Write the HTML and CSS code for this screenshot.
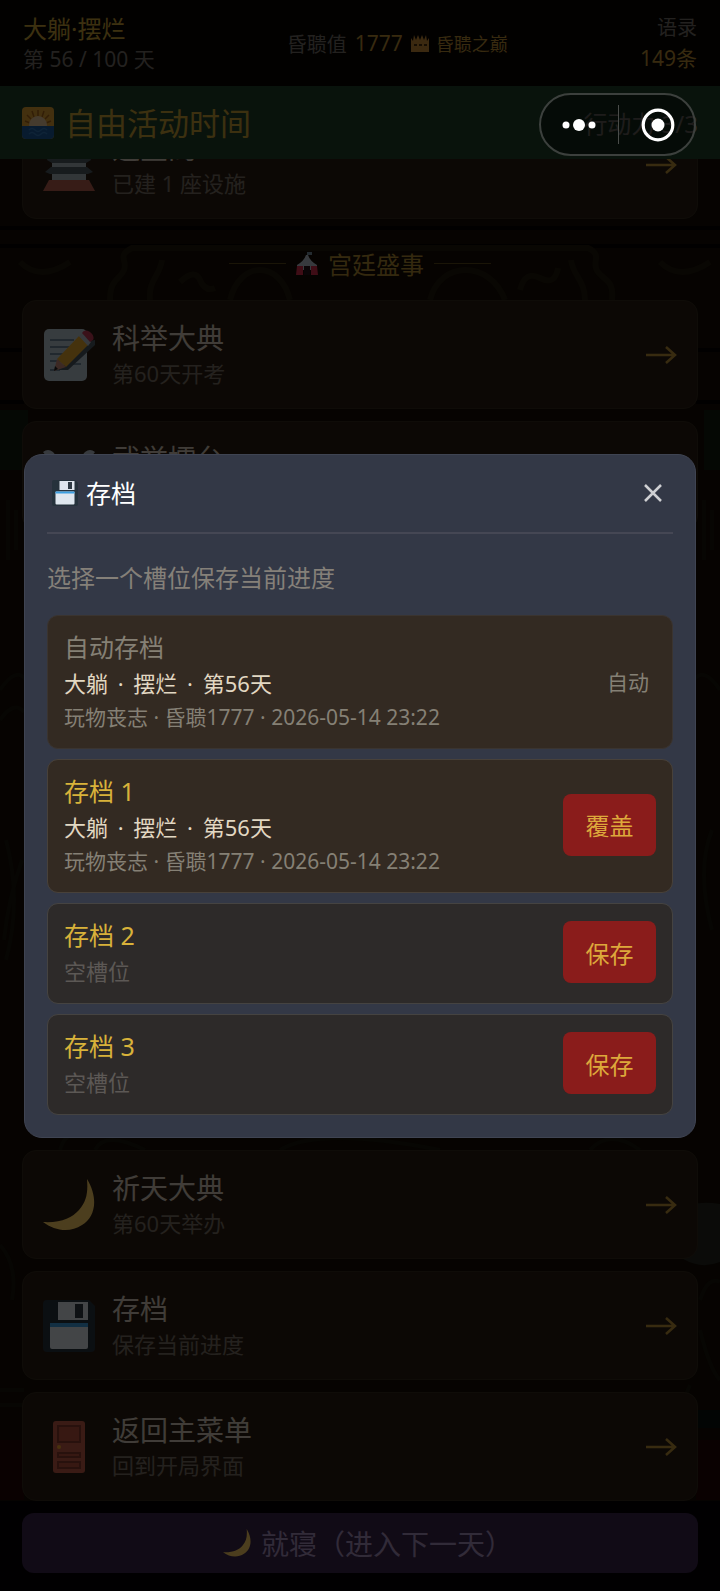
FILE: index.html
```html
<!DOCTYPE html>
<html lang="zh-CN">
<head>
<meta charset="utf-8">
<meta name="viewport" content="width=device-width, initial-scale=1">
<title>存档</title>
<link rel="stylesheet" href="styles.css">
</head>
<body>
<svg class="defs" aria-hidden="true">
  <symbol id="floppy" viewBox="0 0 52 52">
    <path d="M4 0h42l6 6v42a4 4 0 0 1-4 4H4a4 4 0 0 1-4-4V4a4 4 0 0 1 4-4z" fill="#26323c"/>
    <path d="M15 2h30v18H15z" fill="#dfe6ee"/>
    <path d="M32 4h8v14h-8z" fill="#2f3a44"/>
    <path d="M7 25a2 2 0 0 1 2-2h34a2 2 0 0 1 2 2v22a2 2 0 0 1-2 2H9a2 2 0 0 1-2-2z" fill="#dfe6ee"/>
    <path d="M7 23h38v4H7z" fill="#3c9fe0"/>
  </symbol>
  <symbol id="moon" viewBox="0 0 52 52">
    <path d="M44 0c12 20 8 38-5 46C27 54 12 52 0 43c18 1 29-4 36-12 8-9 9-18 8-31z" fill="#ffd065"/>
  </symbol>
  <symbol id="arrow" viewBox="0 0 32 18">
    <path d="M1 9h28M21 1l9 8-9 8" fill="none" stroke="currentColor" stroke-width="2.5"/>
  </symbol>
</svg>

<div class="game">
  <svg class="scenery" viewBox="0 0 720 1591" preserveAspectRatio="xMidYMid slice" aria-hidden="true">
    <g fill="none" stroke="#20180b" stroke-width="6">
      <path d="M0 246h720M0 228h720M0 350h24M0 402h24M696 350h24M696 402h24" stroke="#050301" stroke-width="4"/>
      <path d="M110 300c0-22 10-20 14-30s-8-14 8-22h456c16 8 2 14 10 24s16 8 14 28"/>
      <path d="M180 282q15-14 20-2t15 8M230 300c10-40 50-40 60 0M430 300c10-40 60-40 75 0M520 290q5-20 20-12t18-10M150 300c-2-20 10-24 12-40M585 300c0-20-12-24-14-40M20 262q20 20 50 0M660 262q20 20 50 0"/>
      <path d="M8 500v60M16 510v40M704 500v60M712 510v40M0 690q16-24 26-10M0 720q14-20 24-8M720 690q-16-24-26-10M6 840q16 60 0 120M22 860q-14 40-18 80M712 830q-16 40 0 100" stroke="#19150b" stroke-width="4"/>
      <path d="M60 1150q5-18 20-16M95 1150q10-20 50 0M280 1150q40-24 160 0M590 1150q20-22 50 0M0 1245q18 20 12 55M0 1390h24M0 1405h24M700 1300q8-24 20-18M700 1330q10 40 20 50M690 1385l-10 24" stroke="#19150b" stroke-width="4"/>
    </g>
    <path d="M0 410h28v60H0zM704 410h16v60h-16z" fill="#121c0e"/>
    <path d="M662 1240q10-44 58-36v58q-30 12-58-22z" fill="#25261f"/>
    <path d="M0 1440h24v60H0zM696 1440h24v60h-24z" fill="#220404"/>
    <path d="M696 1410h24v18h-24z" fill="#07120e"/>
  </svg>

  <header class="status">
    <div class="who"><strong>大躺·摆烂</strong><span>第 56 / 100 天</span></div>
    <div class="rank">
      <span>昏聩值</span><b>1777</b>
      <em><svg width="18" height="18" viewBox="0 0 18 18" aria-hidden="true"><path d="M0 4l2 3 1-6 2 5 2-5 2 5 2-5 2 5 2-5 1 6 2-3v14H0z" fill="#c68a38"/><path d="M3 10h3v2H3zm5 0h3v2H8zm5 0h3v2h-3z" fill="#4a3010"/></svg>昏聩之巅</em>
    </div>
    <div class="quotes"><span>语录</span><b>149条</b></div>
  </header>

  <div class="phase">
    <h1><svg width="32" height="32" viewBox="0 0 32 32" aria-hidden="true"><rect width="32" height="32" rx="4" fill="#e0a233"/><g stroke="#a8641a" stroke-width="1.5"><path d="M16 3v6M10 4l2 6M22 4l-2 6M5 8l4 4M27 8l-4 4M3 14l5 2M29 14l-5 2"/></g><circle cx="16" cy="18" r="9" fill="#e8c59a"/><path d="M0 19h32v9a4 4 0 0 1-4 4H4a4 4 0 0 1-4-4z" fill="#1d5c9e"/><path d="M7 23q3-3 6 0t6 0 6 0M7 27q3-3 6 0t6 0 6 0" fill="none" stroke="#3277b8" stroke-width="1.5"/></svg>自由活动时间</h1>
    <span>行动力 3/3</span>
  </div>

  <main class="feed">
    <section class="group">
      <a class="card card-first" href="#build">
        <svg class="icon" viewBox="0 0 52 52" aria-hidden="true"><path d="M9 8h34v33H9z" fill="#a9b5bd"/><path d="M8 10h36l4 11-5 3H9l-5-3zM8 28h36l6 5-5 2H7l-5-2z" fill="#4d5a63"/><path d="M6 41h40l6 11H0z" fill="#b8604e"/></svg>
        <span class="label"><b>造星阁</b><small>已建 1 座设施</small></span>
        <svg class="go" aria-hidden="true"><use href="#arrow"/></svg>
      </a>
      <h2><svg width="22" height="24" viewBox="0 0 22 24" aria-hidden="true"><path d="M11 0h5v3h-5z" fill="#7890a0"/><path d="M10 3h2q2 6 9 10v5H1v-5q7-4 9-10z" fill="#b9c4cf"/><path d="M1 14h6v9H0zm14 0h6l1 9h-7z" fill="#d42c4a"/><path d="M8 14h6v9H8z" fill="#241318"/></svg>宫廷盛事</h2>
      <a class="card" href="#exam">
        <svg class="icon" viewBox="0 0 52 52" aria-hidden="true"><rect x="1" width="43" height="52" rx="5" fill="#b9c8d2"/><path d="M7 11h24M7 18h22M7 25h18M7 32h12M24 35h14M7 41h10" stroke="#71889a" stroke-width="2"/><path d="M15 41l32-29 5-1v5L25 41z" fill="#4a5862"/><path d="M14 30L36 7l9 9-22 22z" fill="#e6a92c"/><path d="M14 30l9 8-12 4z" fill="#c98b7a"/><path d="M12 37l3 3-4 2z" fill="#222"/><path d="M36 7l4-3 8 9-3 4z" fill="#b7bfc8"/><path d="M39 4c4-7 14 2 11 7l-3 2z" fill="#c13a55"/></svg>
        <span class="label"><b>科举大典</b><small>第60天开考</small></span>
        <svg class="go" aria-hidden="true"><use href="#arrow"/></svg>
      </a>
      <a class="card" href="#arena">
        <svg class="icon" viewBox="0 0 52 52" aria-hidden="true"><path d="M0 2q5-4 10 0l30 36-6 6zM52 2q-5-4-10 0L12 38l6 6z" fill="#b9c4cf"/></svg>
        <span class="label"><b>武举擂台</b><small>第60天开擂</small></span>
        <svg class="go" aria-hidden="true"><use href="#arrow"/></svg>
      </a>
    </section>
    <section class="group">
      <a class="card" href="#pray">
        <svg class="icon" aria-hidden="true"><use href="#moon"/></svg>
        <span class="label"><b>祈天大典</b><small>第60天举办</small></span>
        <svg class="go" aria-hidden="true"><use href="#arrow"/></svg>
      </a>
      <a class="card" href="#save">
        <svg class="icon" aria-hidden="true"><use href="#floppy"/></svg>
        <span class="label"><b>存档</b><small>保存当前进度</small></span>
        <svg class="go" aria-hidden="true"><use href="#arrow"/></svg>
      </a>
      <a class="card" href="#menu">
        <svg class="icon" viewBox="0 0 52 52" aria-hidden="true"><rect x="10" width="32" height="52" rx="3" fill="#c45c48"/><path d="M15 5h22v16H15zM15 32h22v4H15zM15 41h22v6H15z" fill="#b8523f" stroke="#863a2c" stroke-width="2"/><circle cx="16" cy="26" r="2" fill="#f0a82c"/></svg>
        <span class="label"><b>返回主菜单</b><small>回到开局界面</small></span>
        <svg class="go" aria-hidden="true"><use href="#arrow"/></svg>
      </a>
    </section>
  </main>

  <footer class="dock">
    <button type="button" class="sleep"><svg width="28" height="28" aria-hidden="true"><use href="#moon"/></svg>就寝（进入下一天）</button>
  </footer>
</div>

<div class="overlay">
  <div class="modal" role="dialog" aria-modal="true" aria-labelledby="modal-title">
    <div class="modal-head">
      <h2 id="modal-title"><svg width="26" height="26" aria-hidden="true"><use href="#floppy"/></svg>存档</h2>
      <button type="button" class="close" aria-label="关闭"><svg width="18" height="18" viewBox="0 0 18 18"><path d="M1 1l16 16M17 1L1 17" stroke="currentColor" stroke-width="2.5"/></svg></button>
    </div>
    <p class="hint">选择一个槽位保存当前进度</p>
    <ul class="slots">
      <li class="slot filled auto"><div class="info"><h3>自动存档</h3><p>大躺 <i>·</i> 摆烂 <i>·</i> 第56天</p><small>玩物丧志 · 昏聩1777 · 2026-05-14 23:22</small></div><span class="tag">自动</span></li>
      <li class="slot filled"><div class="info"><h3>存档 1</h3><p>大躺 <i>·</i> 摆烂 <i>·</i> 第56天</p><small>玩物丧志 · 昏聩1777 · 2026-05-14 23:22</small></div><button type="button">覆盖</button></li>
      <li class="slot"><div class="info"><h3>存档 2</h3><p>空槽位</p></div><button type="button">保存</button></li>
      <li class="slot"><div class="info"><h3>存档 3</h3><p>空槽位</p></div><button type="button">保存</button></li>
    </ul>
  </div>
</div>

<div class="capsule">
  <button type="button" aria-label="更多"><svg width="34" height="14" viewBox="0 0 34 14"><g fill="#fff"><circle cx="4" cy="7" r="3.5"/><circle cx="17" cy="7" r="6"/><circle cx="30" cy="7" r="3.5"/></g></svg></button>
  <button type="button" aria-label="关闭小程序"><svg width="34" height="34" viewBox="0 0 34 34"><circle cx="17" cy="17" r="14.8" fill="none" stroke="#fff" stroke-width="3.2"/><circle cx="17" cy="17" r="6.5" fill="#fff"/></svg></button>
</div>
</body>
</html>
```
FILE: styles.css
```css
* { box-sizing: border-box; }
body {
  margin: 0;
  background: #000;
  font-family: "Noto Sans", "Noto Sans CJK SC", sans-serif;
  font-weight: 400;
}
h1, h2, h3, p, ul { margin: 0; padding: 0; font-weight: inherit; }
b, strong, em, small, i { font-weight: inherit; font-style: normal; }
button { border: 0; padding: 0; background: none; font: inherit; color: inherit; }
.defs { position: absolute; width: 0; height: 0; }

.game {
  position: relative;
  display: flex;
  flex-direction: column;
  height: 100vh;
  min-height: 1200px;
  overflow: hidden;
  background: #140c04;
}
.scenery { position: absolute; inset: 0; width: 100%; height: 100%; }
.status, .phase, .feed, .dock { position: relative; }

.status {
  display: flex;
  flex: none;
  justify-content: space-between;
  align-items: center;
  height: 86px;
  padding: 0 23px;
  background: #070503;
  color: #77706a;
  font-size: 20px;
}
.who, .quotes { display: flex; flex-direction: column; line-height: 31px; }
.who { padding-top: 2px; font-size: 21px; }
.who strong { font-size: 24px; color: #c9a236; }
.rank { display: flex; align-items: center; gap: 8px; color: #77706a; }
.rank b, .quotes b { font-size: 21px; color: #b98c34; }
.rank em { display: flex; align-items: center; gap: 7px; font-size: 18px; color: #b98c34; }
.quotes { text-align: right; }

.phase {
  display: flex;
  flex: none;
  justify-content: space-between;
  align-items: center;
  height: 73px;
  padding: 0 22px;
  background: #20402a;
  color: #a8a29a;
  font-size: 24px;
}
.phase h1 { display: flex; align-items: center; gap: 11px; font-size: 31px; line-height: 40px; color: #c9a236; }

.feed {
  display: flex;
  flex: 1;
  flex-direction: column;
  justify-content: space-between;
  min-height: 0;
  overflow: hidden;
  padding: 0 22px;
}
.group { display: flex; flex-direction: column; gap: 12px; }
.card {
  display: flex;
  flex: none;
  align-items: center;
  gap: 17px;
  height: 109px;
  padding: 0 20px;
  border: 1px solid #33291c;
  border-radius: 14px;
  background: #2a1d13;
  text-decoration: none;
}
.card-first { margin-top: -49px; }
.icon { width: 52px; height: 52px; }
.label { display: flex; flex: 1; flex-direction: column; gap: 3px; }
.label b { font-size: 28px; line-height: 34px; color: #d5cabb; }
.label small { font-size: 22px; line-height: 30px; color: #7b7166; }
.go { width: 32px; height: 18px; color: #bb9138; }
.group h2 {
  display: flex;
  justify-content: center;
  align-items: center;
  gap: 10px;
  height: 57px;
  margin-top: 4px;
  margin-bottom: -4px;
  font-size: 24px;
  color: #b08b33;
}
.group h2::before, .group h2::after { content: ""; width: 57px; height: 1px; background: #594618; }

.dock { flex: none; padding: 12px 22px 18px; background: #050304; }
.sleep {
  display: flex;
  justify-content: center;
  align-items: center;
  gap: 10px;
  width: 100%;
  height: 60px;
  padding-left: 16px;
  border-radius: 12px;
  background: #39254b;
  color: #a58fbd;
  font-size: 28px;
}

.overlay {
  position: absolute;
  inset: 0;
  display: flex;
  justify-content: center;
  align-items: center;
  min-height: 1200px;
  padding: 0 24px;
  background: rgba(0, 0, 0, .7);
}
.modal {
  width: 100%;
  padding: 0 22px 22px;
  border: 1px solid #3f4452;
  border-radius: 18px;
  background: #333846;
}
.modal-head {
  display: flex;
  justify-content: space-between;
  align-items: center;
  height: 79px;
  padding: 0 11px 0 5px;
  border-bottom: 2px solid #454754;
}
.modal-head h2 { display: flex; align-items: center; gap: 8px; font-size: 25px; line-height: 32px; color: #fff; }
.close { display: flex; color: #cfd0d3; }
.hint { padding: 26px 0 20px; font-size: 24px; line-height: 35px; color: #858079; }
.slots { display: flex; flex-direction: column; gap: 10px; list-style: none; }
.slot {
  display: flex;
  justify-content: space-between;
  align-items: center;
  padding: 15px 16px 17px;
  border: 1px solid #454341;
  border-radius: 11px;
  background: #2d2a29;
}
.filled { background: #332a22; border-color: #48413a; }
.auto { border-color: #3a3430; }
.info { display: flex; flex-direction: column; gap: 5px; }
.slot h3 { font-size: 25px; line-height: 32px; color: #d8b23a; }
.slot p { font-size: 22px; line-height: 30px; color: #5c5855; }
.filled p { color: #e2d8c3; }
.slot p i { margin: 0 4px; }
.slot small { font-size: 21px; line-height: 28px; color: #858075; }
.auto h3 { color: #858075; }
.slot button {
  width: 93px;
  height: 62px;
  border-radius: 8px;
  background: #8a1c1b;
  color: #dda83b;
  font-size: 24px;
}
.tag { padding: 0 7px; font-size: 21px; color: #858075; }

.capsule {
  position: absolute;
  top: 93px;
  right: 24px;
  display: flex;
  width: 157px;
  height: 63px;
  border: 2px solid #3c403d;
  border-radius: 32px;
  background: rgba(0, 0, 0, .4);
}
.capsule button { display: flex; flex: 1; justify-content: center; align-items: center; }
.capsule button + button::before {
  content: "";
  width: 1px;
  height: 39px;
  margin-right: 22px;
  background: #4a4d4a;
}
.capsule button + button { justify-content: flex-start; }
```
